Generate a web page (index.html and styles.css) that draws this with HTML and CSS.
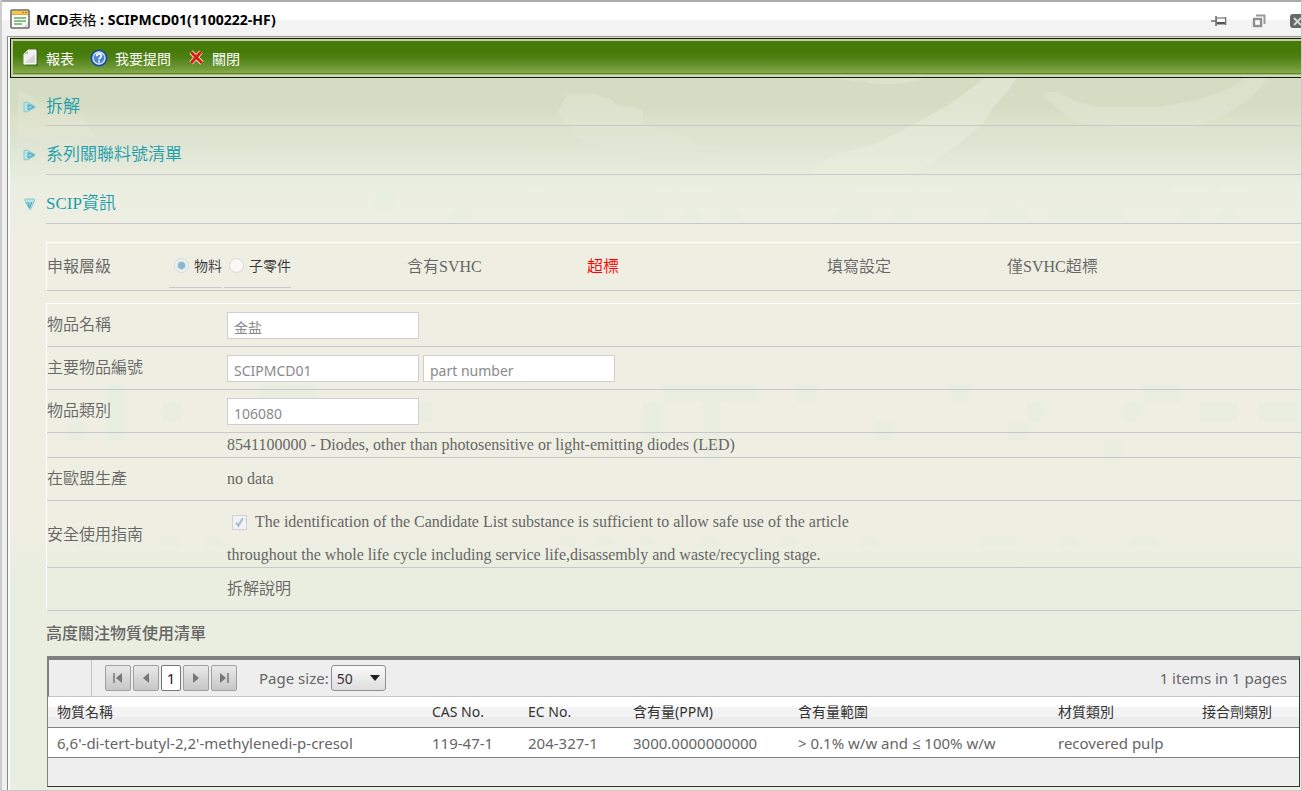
FILE: index.html
```html
<!DOCTYPE html>
<html lang="zh-Hant">
<head>
<meta charset="utf-8">
<title>MCD表格 : SCIPMCD01(1100222-HF)</title>
<link rel="stylesheet" href="styles.css">
</head>
<body>
<div class="window">
  <header class="titlebar">
    <svg class="app-icon" width="20" height="20" viewBox="0 0 20 20" aria-hidden="true">
      <rect x="1" y="1" width="18" height="18" rx="1" fill="#fff" stroke="#6e6b60" stroke-width="1.6"/>
      <rect x="2" y="2" width="16" height="3" fill="#f6c84a"/>
      <rect x="2" y="5" width="16" height="1" fill="#d8a63a"/>
      <rect x="12" y="3" width="2" height="1" fill="#a9802a"/><rect x="15" y="3" width="2" height="1" fill="#a9802a"/>
      <path d="M4 9h12M4 12h12M4 15h8" stroke="#5cae5c" stroke-width="1.4"/>
      <path d="M13 18l5-5v5z" fill="#ddd"/>
    </svg>
    <h1 class="title">MCD<span class="title-cjk">表格</span> : SCIPMCD01(1100222-HF)</h1>
    <div class="window-buttons">
      <button class="icon-button" type="button" aria-label="Pin">
        <svg width="18" height="14" viewBox="0 0 18 14"><path d="M1 7h5M6 2v10M15.500 3v8" stroke="#6f6f6f" stroke-width="1.500"/><rect x="6.500" y="4" width="9" height="6" fill="#fff" stroke="#777" stroke-width="1.200"/><path d="M7 9h8" stroke="#555" stroke-width="2"/></svg>
      </button>
      <button class="icon-button" type="button" aria-label="Restore">
        <svg width="14" height="14" viewBox="0 0 14 14"><path d="M4 1.500h8.500V10" fill="none" stroke="#999" stroke-width="2"/><rect x="2" y="5" width="7" height="7" fill="#fff" stroke="#8f8f8f" stroke-width="2.400"/></svg>
      </button>
      <button class="icon-button" type="button" aria-label="Close">
        <svg width="14" height="14" viewBox="0 0 14 14"><rect width="14" height="14" rx="3" fill="#686868"/><path d="M4 4l7 7M11 4l-7 7" stroke="#ddd" stroke-width="1.800"/></svg>
      </button>
    </div>
  </header>

  <main class="content">
    <svg class="backdrop" width="1292" height="220" viewBox="0 0 1292 220" aria-hidden="true">
      <g transform="translate(-10 -78)">
        <path d="M567 94h28l10 4h5l5 5 10 3h8l10 5v12l12 4 30 8 12 12h24l18 6h20v5h-50l-40 6-60-12-35-15-4-12h-6l-6-14z" fill="#e2e7d6" opacity=".5"/>
        <path d="M815 165l28-13 30-7 45-23 30-17 37-27h32l-10 14-14 16-10 16-22 18-30 22-25 14-60 8h-40z" fill="#e9eddd" opacity=".5"/>
        <path d="M1031 86l16 12v-6h10l22 10 20 5h60l35-7q40-10 50-22h24l-16 20-30 18-26 12h-80l-40-6-16-12z" fill="#e2e7d5" opacity=".5"/>
        <path d="M826 78h98q-30 10-60 4z" fill="#dfe5ce" opacity=".7"/>
        <path d="M18 90l12 4 10 8 14 4 30 12 10 18-30 10-46-10z" fill="#e7ecda" opacity=".3"/>
        <path d="M375 192h19v18h-19zM451 211h20v8h-20zM624 211h39v8h-39zM682 211h19v8h-19zM720 211h20v8h-20zM835 211h38v8h-38zM893 211h20v8h-20zM989 211h38v8h-38zM1047 211h76v8h-76zM1182 211h19v8h-19zM1219 211h19v8h-19z" fill="#eaeee0"/>
        <path d="M529 188h18v3h-18zM653 188h18v3h-18zM682 188h28v3h-28zM855 188h56v3h-56zM922 188h28v3h-28zM1172 188h36v3h-36zM1220 188h28v3h-28z" fill="#edefe3"/>
      </g>
    </svg>
    <svg class="backdrop backdrop-lower" width="1292" height="200" viewBox="0 0 1292 200" aria-hidden="true">
      <g transform="translate(-10 -370)">
        <path d="M106 384h19v56h-19zM163 403h19v18h-19zM67 422h19v18h-19zM259 384h58v18h-58zM412 403h20v18h-20zM663 384h96v18h-96zM643 403h20v37h-20zM702 403h19v56h-19zM797 384h20v18h-20zM950 384h20v18h-20zM875 422h19v18h-19zM1008 422h20v18h-20zM1027 403h20v18h-20zM1143 384h38v18h-38zM1124 403h19v18h-19zM1200 403h38v18h-38zM1258 403h39v18h-39zM1104 441h19v18h-19z" fill="#eaeee0"/>
        <path d="M76 537h28v10h-28zM160 537h20v10h-20zM205 537h18v10h-18zM560 537h16v10h-16zM596 537h18v10h-18zM640 537h14v10h-14zM700 537h18v10h-18zM780 537h18v10h-18zM860 537h18v10h-18zM980 537h38v10h-38zM1060 537h18v10h-18zM1130 537h28v10h-28z" fill="#eaeee0"/>
      </g>
    </svg>

    <nav class="toolbar">
      <button class="tool" type="button">
        <svg width="18" height="20" viewBox="0 0 18 20" aria-hidden="true"><path d="M4 17V6l5-5h8v17H5z" fill="#3c5a20" opacity=".6"/><path d="M3 16V6l4-4h8v14z" fill="#eee" stroke="#fff"/><path d="M3 6h4V2z" fill="#bbb"/><path d="M4 15l10-9v9z" fill="#d6d6d6"/></svg>
        <span>報表</span>
      </button>
      <button class="tool" type="button">
        <svg width="18" height="20" viewBox="0 0 18 20" aria-hidden="true"><circle cx="9" cy="10" r="7.600" fill="#3f7fd0" stroke="#1d4f9e" stroke-width="2"/><circle cx="9" cy="10" r="6" fill="#4a86d2" stroke="#d7e7f7" stroke-width="1.300"/><path d="M6.600 8.300q0-2.500 2.500-2.500 2.300 0 2.300 2 0 1.200-1.300 1.900-1 .6-1 1.900" fill="none" stroke="#fff" stroke-width="1.700"/><rect x="8.200" y="12.600" width="1.800" height="1.800" fill="#fff"/></svg>
        <span>我要提問</span>
      </button>
      <button class="tool" type="button">
        <svg width="18" height="20" viewBox="0 0 18 20" aria-hidden="true"><path d="M4 4l11 11M14 4L4 15" stroke="#f5d9c4" stroke-width="4.600"/><path d="M4 4l11 11M14 4L4 15" stroke="#d3200d" stroke-width="2.800"/></svg>
        <span>關閉</span>
      </button>
    </nav>

    <section class="sections">
      <h2 class="section-head">
        <svg class="marker" width="13" height="12" viewBox="0 0 13 12" aria-hidden="true"><path d="M1 1.500v9l3 .5 8-4.500v-1L4 1z" fill="#b9e4e8" stroke="#83c9d4"/><path d="M5 3.500v5.500l6-3z" fill="#8fd0da" stroke="#4aa5b8"/></svg>
        <a href="#parts">拆解</a>
      </h2>
      <h2 class="section-head">
        <svg class="marker" width="13" height="12" viewBox="0 0 13 12" aria-hidden="true"><path d="M1 1.500v9l3 .5 8-4.500v-1L4 1z" fill="#b9e4e8" stroke="#83c9d4"/><path d="M5 3.500v5.500l6-3z" fill="#8fd0da" stroke="#4aa5b8"/></svg>
        <a href="#series">系列關聯料號清單</a>
      </h2>
      <h2 class="section-head">
        <svg class="marker" width="13" height="12" viewBox="0 0 13 12" aria-hidden="true"><path d="M2 1h9.500v2L7.500 11.500h-1L2 3z" fill="#b9e4e8" stroke="#83c9d4"/><path d="M4.500 4l2 6 2.500-6" fill="#8fd0da" stroke="#4aa5b8"/></svg>
        <a href="#scip">SCIP資訊</a>
      </h2>

      <div class="box summary" id="scip">
        <span class="level-label" id="level">申報層級</span>
        <div class="level-options" role="radiogroup" aria-labelledby="level">
          <label class="option"><input class="radio" type="radio" name="level" checked disabled>物料</label>
          <label class="option"><input class="radio" type="radio" name="level" disabled>子零件</label>
        </div>
        <span>含有SVHC</span>
        <span class="alert">超標</span>
        <span>填寫設定</span>
        <span>僅SVHC超標</span>
      </div>

      <div class="box form">
        <div class="row">
          <label for="name">物品名稱</label>
          <div class="fields"><input class="field" id="name" type="text" value="金盐" disabled></div>
        </div>
        <div class="row">
          <label for="number">主要物品編號</label>
          <div class="fields">
            <input class="field" id="number" type="text" value="SCIPMCD01" disabled>
            <input class="field" type="text" value="part number" aria-label="Number type" disabled>
          </div>
        </div>
        <div class="row">
          <label for="category">物品類別</label>
          <div class="fields"><input class="field" id="category" type="text" value="106080" disabled></div>
        </div>
        <div class="row row-note">
          <span></span>
          <span>8541100000 - Diodes, other than photosensitive or light-emitting diodes (LED)</span>
        </div>
        <div class="row">
          <span>在歐盟生產</span>
          <span>no data</span>
        </div>
        <div class="row row-guide">
          <span>安全使用指南</span>
          <div class="guide">
            <label><input class="check" type="checkbox" checked disabled>The identification of the Candidate List substance is sufficient to allow safe use of the article<br>throughout the whole life cycle including service life,disassembly and waste/recycling stage.</label>
          </div>
        </div>
        <div class="row">
          <span></span>
          <span>拆解說明</span>
        </div>
      </div>

      <h3 class="list-title">高度關注物質使用清單</h3>

      <div class="grid">
        <div class="pager">
          <div class="pager-spacer"></div>
          <div class="pager-buttons">
            <button class="page-button" type="button" aria-label="First page"><svg width="12" height="12" viewBox="0 0 12 12"><path d="M2 1v10" stroke="#777" stroke-width="1.500"/><path d="M10 1v10L4 6z" fill="#777"/></svg></button>
            <button class="page-button" type="button" aria-label="Previous page"><svg width="12" height="12" viewBox="0 0 12 12"><path d="M9 1v10L3 6z" fill="#777"/></svg></button>
            <button class="page-button current" type="button">1</button>
            <button class="page-button" type="button" aria-label="Next page"><svg width="12" height="12" viewBox="0 0 12 12"><path d="M3 1v10l6-5z" fill="#777"/></svg></button>
            <button class="page-button" type="button" aria-label="Last page"><svg width="12" height="12" viewBox="0 0 12 12"><path d="M10 1v10" stroke="#777" stroke-width="1.500"/><path d="M2 1v10l6-5z" fill="#777"/></svg></button>
          </div>
          <label class="size-label" for="size">Page size:</label>
          <div class="select-wrap">
            <select class="size" id="size"><option>50</option></select>
            <svg class="caret" width="10" height="6" viewBox="0 0 10 6" aria-hidden="true"><path d="M0 0h10L5 6z" fill="#222"/></svg>
          </div>
          <span class="total">1 items in 1 pages</span>
        </div>
        <table class="table">
          <colgroup><col class="c-name"><col class="c-cas"><col class="c-ec"><col class="c-ppm"><col class="c-range"><col class="c-type"><col></colgroup>
          <thead>
            <tr><th>物質名稱</th><th>CAS No.</th><th>EC No.</th><th>含有量(PPM)</th><th>含有量範圍</th><th>材質類別</th><th>接合劑類別</th></tr>
          </thead>
          <tbody>
            <tr><td>6,6'-di-tert-butyl-2,2'-methylenedi-p-cresol</td><td>119-47-1</td><td>204-327-1</td><td>3000.0000000000</td><td>&gt; 0.1% w/w and ≤ 100% w/w</td><td>recovered pulp</td><td></td></tr>
          </tbody>
        </table>
        <div class="grid-footer"></div>
      </div>
    </section>
  </main>
</div>
</body>
</html>
```

FILE: styles.css
```css
* { box-sizing: border-box; }

body {
  margin: 0;
  overflow: hidden;
  color: #666;
  font-family: "Liberation Serif", "Noto Sans CJK TC", serif;
  font-size: 16px;
  font-weight: 350;
}

button, input, select { font: inherit; }

.window {
  display: flex;
  flex-direction: column;
  height: 100vh;
  padding-left: 4px;
  background: #f0f0f0;
  border-left: 2px solid #ccc;
  border-right: 1px solid #c8c8c8;
  border-bottom: 1px solid #c8c8c8;
}

.titlebar {
  display: flex;
  flex: none;
  align-items: center;
  height: 36px;
  margin-left: -4px;
  padding: 2px 0 0 8px;
  overflow: hidden;
  background: linear-gradient(#fff 18px, #f3f3f3 18px);
  border-top: 2px solid #aaa;
}

.app-icon { margin-bottom: 2px; }

.title {
  flex: 1;
  margin: 0 0 0 6px;
  color: #000;
  font: 700 14px/18px "Noto Sans", "Noto Sans CJK TC", sans-serif;
}

.title-cjk { font-weight: 400; }

.window-buttons {
  display: flex;
  gap: 24px;
  align-items: center;
  margin-right: -3px;
  padding-top: 2px;
}

.icon-button {
  display: flex;
  padding: 0;
  background: none;
  border: 0;
}

.content {
  position: relative;
  flex: 1;
  min-height: 0;
  margin-left: 1px;
  padding: 1px 0 0 1px;
  overflow: hidden;
  background: linear-gradient(#d4dcc3 68px, #dde1ca 84px, #dee4d2 104px, #e5e9da 128px, #eaeee0 146px, #eeefe2 196px, #eeefe2 500px, #eaeee0 530px);
  border-left: 1px solid #888;
  border-top: 1px solid #999;
  box-shadow: inset 2px 0 #fafaf8;
}

.backdrop {
  position: absolute;
  top: 41px;
  left: 2px;
}

.backdrop-lower { top: 333px; }

.toolbar {
  position: relative;
  display: flex;
  gap: 16px;
  align-items: center;
  height: 40px;
  margin-left: 1px;
  padding: 0 10px;
  background: linear-gradient(#467a09 12px, #4c8012 18px, #6b9632 28px, #88a94d 34px, #5c8622 34px, #5c8622 35px, #a9bf79 35px);
  border: 1px solid #161d10;
  border-right: 0;
  box-shadow: inset 2px 2px #c3ce9f, inset 0 -2px #cfd8ba;
}

.tool {
  display: flex;
  gap: 7px;
  align-items: center;
  padding: 0;
  color: #fff;
  font: 14px/20px "Noto Sans CJK TC", sans-serif;
  background: none;
  border: 0;
}

.tool svg { flex: none; }

.sections {
  position: relative;
  padding-left: 37px;
}

.section-head {
  display: flex;
  align-items: center;
  height: 49px;
  margin: 0 0 0 -23px;
  padding: 9px 0 0;
  font-size: 17px;
  font-weight: 350;
  line-height: 24px;
  background: linear-gradient(#c8c9cc, #c8c9cc) 23px 100% / 100% 1px no-repeat;
}

.section-head:first-child { height: 48px; }

.marker { flex: none; margin-right: 10px; }

.section-head a { color: #1e9dab; text-decoration: none; }

.box {
  border-top: 1px solid #fff;
  border-left: 1px solid #fff;
}

.summary {
  display: grid;
  grid-template-columns: 120px 240px 180px 240px 180px 1fr;
  align-items: center;
  height: 49px;
  margin-top: 18px;
  line-height: 24px;
  border-bottom: 1px solid #c8c9cc;
}

.level-options {
  display: flex;
  gap: 2px;
  align-self: end;
  padding-left: 2px;
}

.option {
  display: flex;
  gap: 5px;
  align-items: center;
  height: 42px;
  margin-bottom: 2px;
  padding-left: 5px;
  color: #333;
  font-size: 14px;
  border-bottom: 1px solid #c8c9cc;
}

.radio {
  width: 15px;
  height: 15px;
  margin: 0 0 3px;
  appearance: none;
  background: #f8f8f7;
  border: 1px solid #d7d9d6;
  border-radius: 50%;
}

.radio:checked { background: radial-gradient(#87b8cf 3px, #c9dce3 4px, #eef1ef 5px); }

.alert { color: #f00; }

.form { margin-top: 12px; }

.row {
  display: grid;
  grid-template-rows: 100%;
  grid-template-columns: 180px 1fr;
  align-items: center;
  height: 43px;
  line-height: 24px;
  border-bottom: 1px solid #c8c9cc;
}

.row-note { height: 25px; }

.row-guide { height: 67px; line-height: 33px; }

.guide { padding-top: 8px; }

.fields { display: flex; gap: 4px; padding-top: 1px; }

.field {
  width: 192px;
  height: 27px;
  padding: 3px 6px 0;
  color: #8a8a8a;
  font: 14px/20px "Noto Sans", "Noto Sans CJK TC", sans-serif;
  background: #fff;
  border: 1px solid #cfcfd2;
}

.check {
  width: 15px;
  height: 15px;
  margin: 0 8px 0 5px;
  vertical-align: -3px;
  appearance: none;
  background: #f0f3f5 url("data:image/svg+xml,%3Csvg xmlns='http://www.w3.org/2000/svg' viewBox='0 0 12 12'%3E%3Cpath d='M3 6l2 3 4-7' fill='none' stroke='%23a9bed2' stroke-width='2'/%3E%3C/svg%3E");
  border: 1px solid #cfd3d3;
}

.list-title {
  margin: 11px 0 10px;
  font-size: 16px;
  font-weight: 500;
  line-height: 24px;
}

.grid {
  margin: 0 1px;
  font-family: "Noto Sans", "Open Sans", "Noto Sans CJK TC", sans-serif;
  font-size: 15px;
  font-weight: 400;
  background: #eee;
  border: 1px solid #333;
  border-left-color: #808080;
  border-top: 4px solid #808080;
}

.pager {
  display: flex;
  align-items: center;
  height: 37px;
  padding-right: 12px;
  border-left: 1px solid #808080;
  border-bottom: 1px solid #c4c4c4;
}

.pager-spacer {
  width: 43px;
  height: 100%;
  margin-right: 13px;
  border-right: 1px solid #c4c4c4;
}

.pager-buttons { display: flex; gap: 2px; }

.page-button {
  display: flex;
  align-items: center;
  justify-content: center;
  width: 26px;
  height: 26px;
  padding: 0;
  background: linear-gradient(#e9e9e9, #c6c6c6);
  border: 1px solid #a0a0a0;
  border-radius: 2px;
}

.page-button.current {
  width: 20px;
  color: #222;
  background: #fff;
  border-color: #777;
}

.size-label { margin: 0 2px 0 22px; }

.select-wrap { position: relative; }

.size {
  width: 55px;
  height: 26px;
  padding: 0 5px;
  color: #333;
  font-size: 14px;
  appearance: none;
  background: linear-gradient(#fafafa, #ddd);
  border: 1px solid #909090;
  border-radius: 3px;
}

.caret {
  position: absolute;
  top: 10px;
  right: 6px;
  pointer-events: none;
}

.total { margin-left: auto; }

.table {
  width: 100%;
  table-layout: fixed;
  border-collapse: separate;
  border-spacing: 0;
  line-height: 20px;
  text-align: left;
  white-space: nowrap;
}

.c-name { width: 375px; }
.c-cas { width: 96px; }
.c-ec { width: 105px; }
.c-ppm { width: 165px; }
.c-range { width: 260px; }
.c-type { width: 144px; }

.table th, .table td {
  height: 30px;
  padding: 4px 0 4px 9px;
  border-bottom: 1px solid #808080;
}

.table th {
  height: 31px;
  color: #333;
  font-size: 14px;
  font-weight: 400;
  background: linear-gradient(#fff 10px, #f3f3f3 10px, #f3f3f3 20px, #ececec 20px);
}

.table tbody tr { background: #fff; }

.grid-footer { height: 28px; }
```
